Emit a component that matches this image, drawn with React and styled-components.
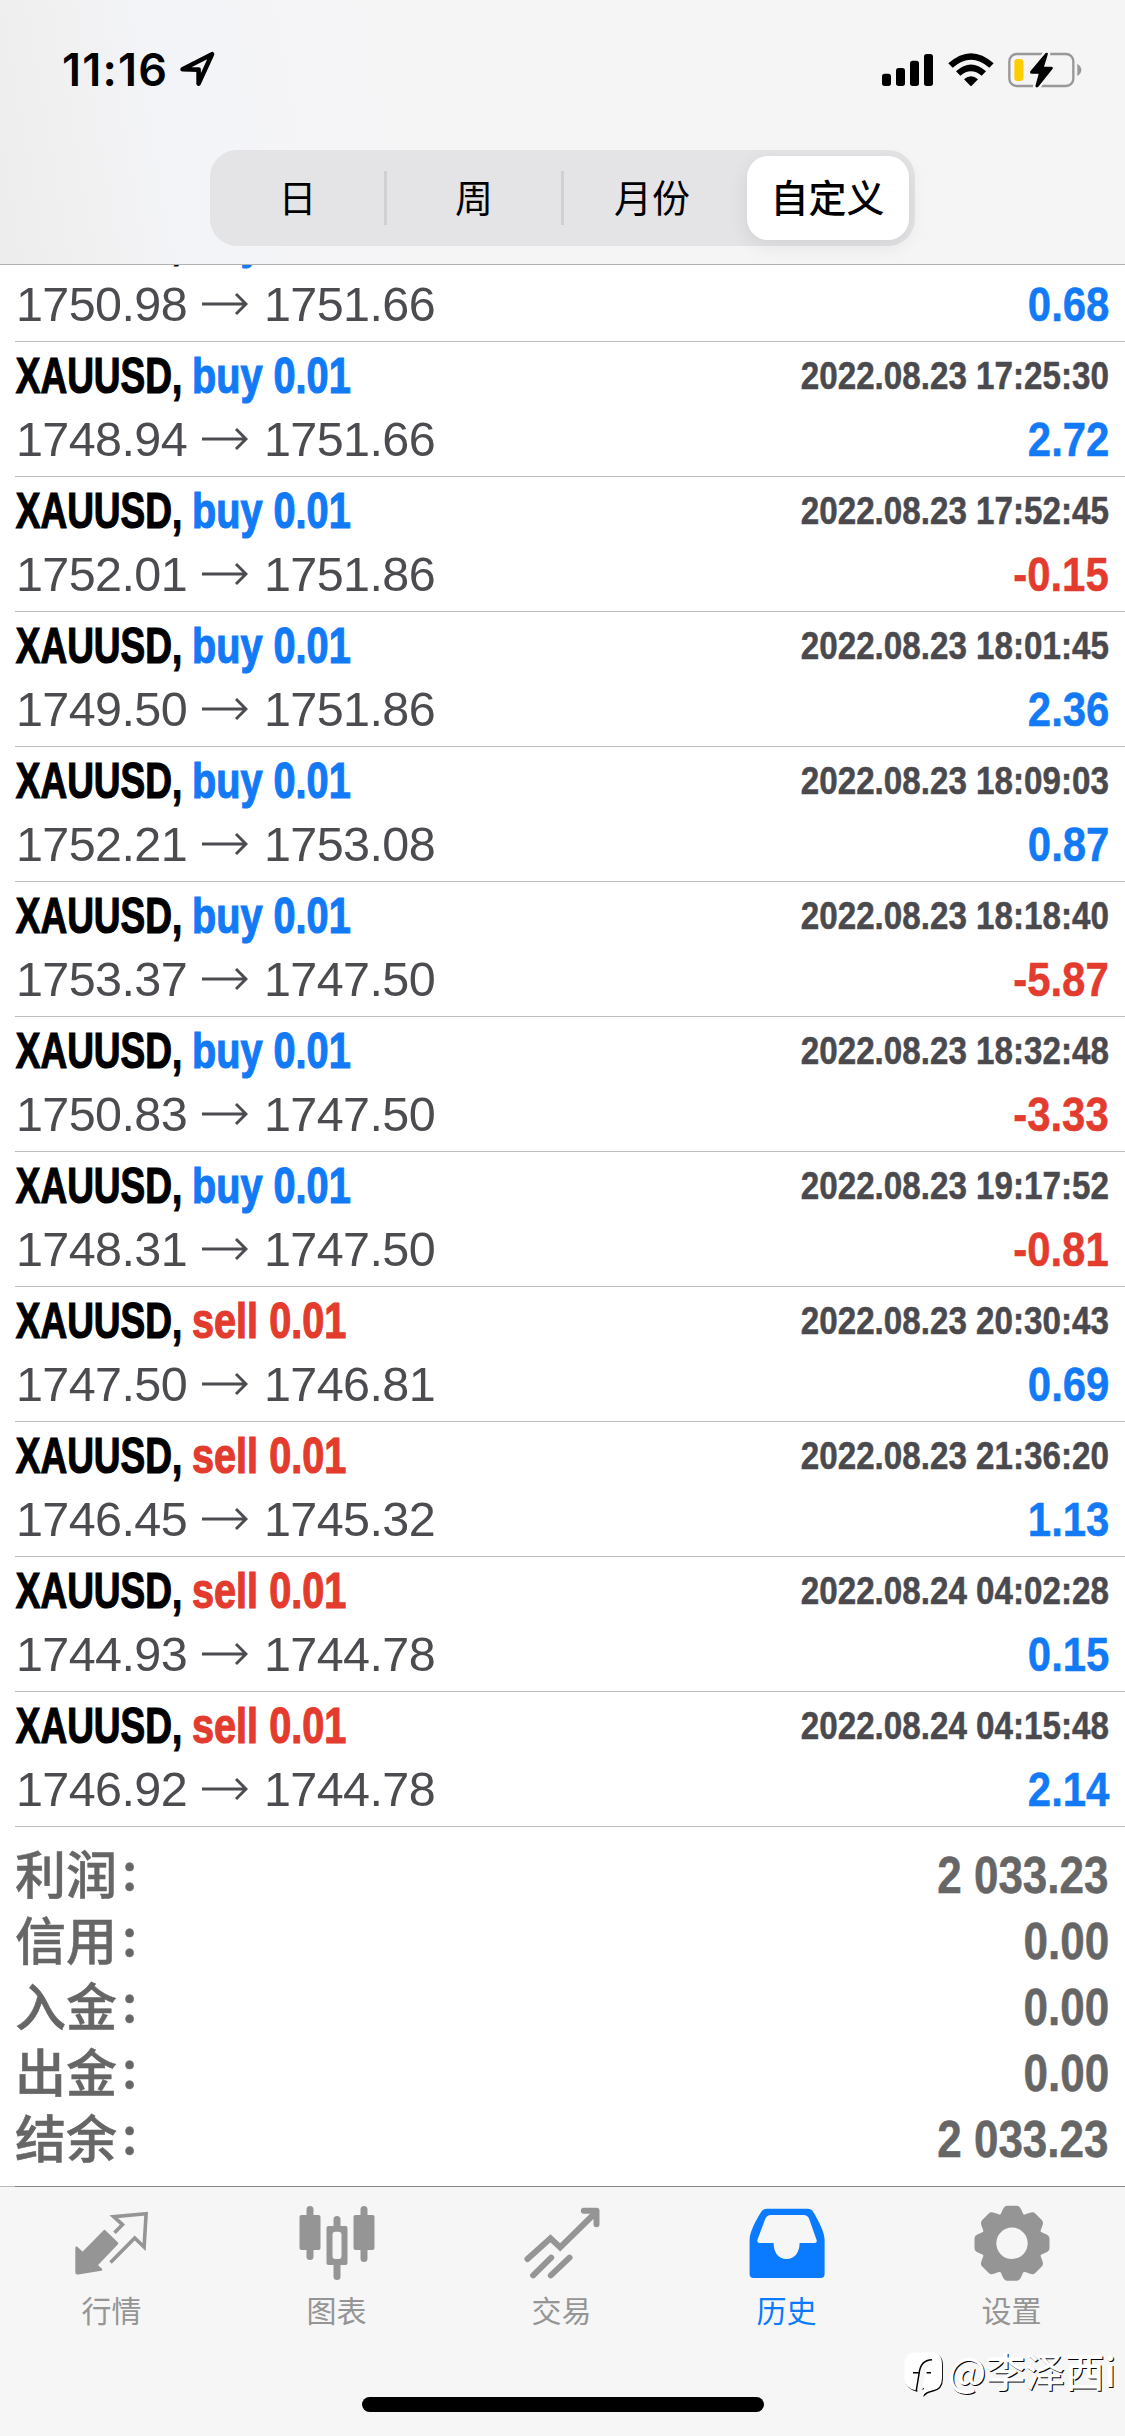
import React from "react";
import styled, { createGlobalStyle } from "styled-components";

const BLUE = "#127af6";
const RED = "#e33b2e";

const segments = ["日", "周", "月份", "自定义"];

const deals = [
  { type: "buy", open: "1750.98", close: "1751.66", profit: "0.68" },
  { type: "buy", open: "1748.94", close: "1751.66", time: "2022.08.23 17:25:30", profit: "2.72" },
  { type: "buy", open: "1752.01", close: "1751.86", time: "2022.08.23 17:52:45", profit: "-0.15" },
  { type: "buy", open: "1749.50", close: "1751.86", time: "2022.08.23 18:01:45", profit: "2.36" },
  { type: "buy", open: "1752.21", close: "1753.08", time: "2022.08.23 18:09:03", profit: "0.87" },
  { type: "buy", open: "1753.37", close: "1747.50", time: "2022.08.23 18:18:40", profit: "-5.87" },
  { type: "buy", open: "1750.83", close: "1747.50", time: "2022.08.23 18:32:48", profit: "-3.33" },
  { type: "buy", open: "1748.31", close: "1747.50", time: "2022.08.23 19:17:52", profit: "-0.81" },
  { type: "sell", open: "1747.50", close: "1746.81", time: "2022.08.23 20:30:43", profit: "0.69" },
  { type: "sell", open: "1746.45", close: "1745.32", time: "2022.08.23 21:36:20", profit: "1.13" },
  { type: "sell", open: "1744.93", close: "1744.78", time: "2022.08.24 04:02:28", profit: "0.15" },
  { type: "sell", open: "1746.92", close: "1744.78", time: "2022.08.24 04:15:48", profit: "2.14" },
];

const totals = [
  ["利润", "2 033.23"],
  ["信用", "0.00"],
  ["入金", "0.00"],
  ["出金", "0.00"],
  ["结余", "2 033.23"],
];

const LocationIcon = () => (
  <svg width="37" height="37" viewBox="0 0 37 37">
    <path
      d="M3.6 18.2 L33 3.2 L19.6 32.6 V18.6 Z"
      fill="none"
      stroke="#000"
      strokeWidth="4.6"
      strokeLinejoin="round"
    />
  </svg>
);

const SignalIcon = () => (
  <svg width="52" height="34" viewBox="36 36 156 102">
    <rect x="36" y="98" width="27" height="37" rx="8" />
    <rect x="78" y="81" width="27" height="54" rx="8" />
    <rect x="120" y="59" width="27" height="76" rx="8" />
    <rect x="162" y="39" width="27" height="96" rx="8" />
  </svg>
);

const WifiIcon = () => (
  <svg width="46" height="34" viewBox="233 36 138 102">
    <path d="M234 67 Q302 6 370 67 L357 80 Q302 32 247 80 Z" />
    <path d="M257 91 Q302 50 347 91 L334 104 Q302 78 270 104 Z" />
    <path d="M281 115 Q302 96 323 115 L304 134 Q302 136 300 134 Z" />
  </svg>
);

const BatteryIcon = () => (
  <svg width="74" height="36" viewBox="416 33 222 108">
    <rect x="420" y="39" width="192" height="96" rx="22" fill="none" stroke="#98989a" strokeWidth="7" />
    <path d="M624 68 Q636 76 636 87 Q636 98 624 105 Z" fill="#98989a" />
    <rect x="435" y="54" width="27" height="66" rx="9" fill="#fc0" />
    <path
      d="M529 36 L483 91 Q480 98 488 98 H508 L498 136 Q501 142 507 137 L550 83 Q552 77 545 77 H524 L536 38 Q534 33 529 36 Z"
      stroke="#f5f5f6"
      strokeWidth="14"
      paintOrder="stroke"
    />
  </svg>
);

const ArrowIcon = () => (
  <svg width="46" height="24" viewBox="0 0 46 24">
    <path d="M0 12 H43.5 M34 2 L44 12 L34 22" fill="none" stroke="#4c4c50" strokeWidth="2.9" />
  </svg>
);

const QuotesIcon = () => (
  <svg width="80" height="80" viewBox="71.5 20 80 80">
    <path
      d="M76 67.6 L82.1 73.4 L104 51 L116.6 63.4 L95.8 85.2 L100.6 89.6 L77.6 93.4 Q76 93.6 76 92 Z"
      fill="currentColor"
      stroke="currentColor"
      strokeWidth="2.4"
      strokeLinejoin="round"
    />
    <path
      d="M114 52.8 L122 44.6 L113.2 36.6 L145.6 33.8 L143.6 67 L134.2 58 L110 82.6"
      fill="none"
      stroke="currentColor"
      strokeWidth="3.6"
    />
  </svg>
);

const ChartIcon = () => (
  <svg width="80" height="80" viewBox="296.5 20 80 80" fill="currentColor">
    <rect x="306" y="26" width="7" height="54" rx="3.5" />
    <rect x="299" y="35" width="21" height="35" rx="2" />
    <rect x="333" y="36" width="7" height="64" rx="3.5" />
    <rect x="326" y="46" width="21" height="39" rx="2" />
    <rect x="332" y="51.7" width="9" height="27.3" rx="3" fill="#f6f6f6" />
    <rect x="360" y="26" width="7" height="56" rx="3.5" />
    <rect x="353" y="35" width="21" height="35" rx="2" />
  </svg>
);

const TradeIcon = () => (
  <svg
    width="80"
    height="80"
    viewBox="64.5 15 240 240"
    fill="none"
    stroke="currentColor"
    strokeWidth="18"
    strokeLinecap="round"
  >
    <path d="M81 192 L150 130 L179 157 L284 54" />
    <path d="M250 47 H288 V88" strokeLinejoin="round" />
    <path d="M98 241 L152 188" />
    <path d="M151 241 L207 188" />
  </svg>
);

const HistoryIcon = () => (
  <svg width="80" height="80" viewBox="0 0 80 80">
    <path
      fillRule="evenodd"
      fill="currentColor"
      d="M20 8.8 H60.6 Q64.6 8.8 66.6 12.4 C72 22 77.6 32 77.6 40 V74 Q77.6 78 73.6 78 H6.6 Q2.6 78 2.6 74 V40 C2.6 32 8 22 13.8 12.4 Q15.8 8.8 20 8.8 Z
         M24 15 Q20 15 18.4 18.6 L10.4 40 Q9.8 43 12.6 43 H26.6 C26.6 52 31 59 39.6 59 C48 59 52.6 52 52.6 43 H67.6 Q70.4 43 69.6 40 L62 18.6 Q60.6 15 56.6 15 Z"
    />
  </svg>
);

const SettingsIcon = () => (
  <svg width="80" height="80" viewBox="-40 -43.3 80 80" overflow="visible">
    <circle r="23" fill="none" stroke="currentColor" strokeWidth="14.6" />
    {[0, 45, 90, 135, 180, 225, 270, 315].map((angle) => (
      <path
        key={angle}
        transform={`rotate(${angle})`}
        fill="currentColor"
        d="M-13 -27 C-9.4 -30.4 -9.6 -37.5 -4.6 -37.5 H4.6 C9.6 -37.5 9.4 -30.4 13 -27 Z"
      />
    ))}
  </svg>
);

const bubble =
  "M12 0.5 H27 Q38 0.5 38 12 V26 Q38 37 28 38.6 Q22 39.6 18.4 44 L20 36 L12 38.6 Q0.5 36 0.5 26 V12 Q0.5 0.5 12 0.5 Z";

const WatermarkLogo = () => (
  <svg width="42" height="48" viewBox="0 0 42 48">
    <path d={bubble} fill="#000" transform="translate(0.9 1.1)" />
    <path d={bubble} fill="#fff" />
    <path d="M15.6 40 L18.4 22 Q19.6 10.6 28 10.4" fill="none" stroke="#f6f6f6" strokeWidth="5" />
    <path d="M12.2 39 L15 22 Q16.4 8 28 7.8" fill="none" stroke="#000" strokeWidth="1.5" />
    <path d="M9 20.8 H14.8 M22.6 20.8 H27" stroke="#000" strokeWidth="1.6" />
  </svg>
);

const tabs = [
  { label: "行情", Icon: QuotesIcon },
  { label: "图表", Icon: ChartIcon },
  { label: "交易", Icon: TradeIcon },
  { label: "历史", Icon: HistoryIcon, active: true },
  { label: "设置", Icon: SettingsIcon },
];

const Deal = ({ type, open, close, time, profit }) => (
  <DealRow>
    <DealLine height={65}>
      <Symbol>XAUUSD,</Symbol>
      <Volume color={type === "buy" ? BLUE : RED}>{type} 0.01</Volume>
      {time && <Time>{time}</Time>}
    </DealLine>
    <DealLine height={60}>
      <Price>{open}</Price>
      <ArrowIcon />
      <Price $close>{close}</Price>
      <Profit color={profit.startsWith("-") ? RED : BLUE}>{profit}</Profit>
    </DealLine>
  </DealRow>
);

const App = () => {
  return (
    <Screen>
      <GlobalStyle />
      <Header>
        <StatusBar>
          <Clock>11:16</Clock>
          <LocationIcon />
          <StatusIcons>
            <SignalIcon />
            <WifiIcon />
            <BatteryIcon />
          </StatusIcons>
        </StatusBar>
        <Segmented>
          {segments.map((name, i) => (
            <Segment key={name} $active={i === 3} $divider={i < 2}>
              {name}
            </Segment>
          ))}
        </Segmented>
      </Header>
      <List>
        <Deals>
          {deals.map((deal) => (
            <Deal key={deal.open} {...deal} />
          ))}
        </Deals>
        <Summary>
          {totals.map(([label, value]) => (
            <SummaryRow key={label}>
              <SummaryLabel>
                {label}
                <Colon>:</Colon>
              </SummaryLabel>
              <SummaryValue>{value}</SummaryValue>
            </SummaryRow>
          ))}
        </Summary>
      </List>
      <Footer>
        <TabBar>
          {tabs.map(({ label, Icon, active }) => (
            <Tab key={label} $active={active}>
              <Icon />
              <TabLabel>{label}</TabLabel>
            </Tab>
          ))}
        </TabBar>
        <HomeIndicator />
        <Watermark>
          <WatermarkLogo />
          <WatermarkText>@李泽西i</WatermarkText>
        </Watermark>
      </Footer>
    </Screen>
  );
};

const GlobalStyle = createGlobalStyle`
  body {
    margin: 0;
    background: #fff;
  }
  * {
    box-sizing: border-box;
  }
  svg {
    display: block;
    flex-shrink: 0;
  }
`;

const Screen = styled.div`
  display: flex;
  flex-direction: column;
  width: 1125px;
  height: 2436px;
  overflow: hidden;
  background: #fff;
  font-family: "Liberation Sans", "Noto Sans CJK SC", sans-serif;
`;

const Header = styled.header`
  display: flex;
  flex-direction: column;
  height: 265px;
  flex-shrink: 0;
  border-bottom: 1px solid #b2b2b3;
  background: linear-gradient(
    80deg,
    #ededed 0,
    #f1f1f2 110px,
    #f3f4f8 200px,
    #f5f5f7 340px,
    #f5f5f5 600px,
    #f5f5f6 100%
  );
`;

const StatusBar = styled.div`
  display: flex;
  align-items: center;
  height: 150px;
  padding: 0 43px 11px 62px;
`;

const Clock = styled.div`
  width: 117px;
  font-family: Inter, sans-serif;
  font-size: 45px;
  font-weight: 600;
  line-height: 60px;
  letter-spacing: 1.2px;
`;

const StatusIcons = styled.div`
  display: flex;
  align-items: center;
  gap: 14px;
  margin-left: auto;
`;

const Segmented = styled.div`
  display: flex;
  align-self: flex-start;
  width: 705px;
  height: 96px;
  margin-left: 210px;
  padding: 6px;
  border-radius: 27px;
  background: #e4e4e6;
`;

const Segment = styled.div`
  display: flex;
  align-items: center;
  justify-content: center;
  width: ${({ $active }) => ($active ? 162 : 177)}px;
  margin-left: ${({ $active }) => ($active ? "auto" : 0)};
  padding: 0 ${({ $divider }) => ($divider ? 3 : 1)}px 4px 0;
  font-family: "Noto Sans CJK SC", sans-serif;
  font-size: 38px;
  font-weight: ${({ $active }) => ($active ? 500 : 400)};
  line-height: 56px;
  border-radius: ${({ $active }) => ($active ? 21 : 0)}px;
  background: ${({ $active, $divider }) =>
    $active
      ? "#fff"
      : $divider
        ? "linear-gradient(#d0d0d2, #d0d0d2) right center / 3px 54px no-repeat"
        : "none"};
  box-shadow: ${({ $active }) => ($active ? "0 6px 20px rgba(0, 0, 0, 0.08)" : "none")};

  &:first-child {
    width: 171px;
    padding-right: 8px;
  }
`;

const List = styled.main`
  height: 1921px;
  flex-shrink: 0;
  overflow: hidden;
`;

/* scrolled so the first deal sits partly under the header */
const Deals = styled.div`
  margin-top: -58px;
  padding-left: 15px;
`;

const DealRow = styled.div`
  height: 135px;
  padding: 2px 16px 0 0;
  border-bottom: 1px solid #bcbcbe;
`;

const DealLine = styled.div`
  display: flex;
  align-items: center;
  height: ${({ height }) => height}px;
  line-height: ${({ height }) => height}px;
  white-space: nowrap;
`;

const Condensed = styled.span`
  flex-shrink: 0;
  font-weight: 700;
  -webkit-text-stroke: 0.5px currentColor;
`;

const Symbol = styled(Condensed)`
  width: 177px;
  padding-left: 1px;
  font-size: 50px;
  color: #000;
  -webkit-text-stroke-width: 1.2px;
  transform: scaleX(0.74);
  transform-origin: left;
`;

const Volume = styled(Condensed)`
  font-size: 50px;
  color: ${({ color }) => color};
  -webkit-text-stroke-width: 1.2px;
  transform: scaleX(0.793);
  transform-origin: left;
`;

const Time = styled(Condensed)`
  margin-left: auto;
  font-size: 38px;
  color: #4a4a4e;
  transform: scaleX(0.873);
  transform-origin: right;
`;

const Price = styled.span`
  width: ${({ $close }) => ($close ? 200 : 187)}px;
  padding-left: ${({ $close }) => ($close ? 16 : 1)}px;
  font-size: 48.5px;
  letter-spacing: -0.6px;
  color: #4c4c50;
`;

const Profit = styled(Condensed)`
  margin-left: auto;
  font-size: 49px;
  color: ${({ color }) => color};
  transform: scaleX(0.855);
  transform-origin: right;
`;

const Summary = styled.div`
  padding: 16px 16px 0 15px;
  color: #666;
`;

const SummaryRow = styled.div`
  display: flex;
  align-items: center;
  justify-content: space-between;
  height: 66px;
  line-height: 66px;
`;

const SummaryLabel = styled.div`
  display: flex;
  margin-top: -9px;
  font-family: "Noto Sans CJK SC", sans-serif;
  font-size: 51px;
  font-weight: 500;
  -webkit-text-stroke: 0.5px currentColor;
`;

const Colon = styled.span`
  margin: -4px 0 0 5px;
`;

const SummaryValue = styled(Condensed)`
  font-size: 51px;
  transform: scaleX(0.863);
  transform-origin: right;
`;

const Footer = styled.footer`
  position: relative;
  flex: 1;
  background: linear-gradient(90deg, #b9b9b9 15px, #858585 15px) top / 100% 1px no-repeat #f6f6f6;
`;

const TabBar = styled.nav`
  display: grid;
  grid-template-columns: repeat(5, 225px);
  height: 210px;
  margin-left: -1px;
  padding-top: 14px;
`;

const Tab = styled.div`
  display: flex;
  flex-direction: column;
  align-items: center;
  color: ${({ $active }) => ($active ? "#0a7aff" : "#959595")};
`;

const TabLabel = styled.div`
  margin-top: 9px;
  font-family: "Noto Sans CJK SC", sans-serif;
  font-size: 30px;
  line-height: 40px;
`;

const HomeIndicator = styled.div`
  width: 402px;
  height: 15px;
  margin: 1px auto 0;
  border-radius: 8px;
  background: #000;
`;

const Watermark = styled.div`
  position: absolute;
  right: 9px;
  bottom: 36px;
  display: flex;
  align-items: flex-start;
  gap: 2px;
`;

const WatermarkText = styled.div`
  font-family: "Noto Sans CJK SC", sans-serif;
  font-size: 39.5px;
  font-weight: 500;
  line-height: 36px;
  color: #fff;
  text-shadow: 1px 1px 0.5px #000;
`;

export default App;
